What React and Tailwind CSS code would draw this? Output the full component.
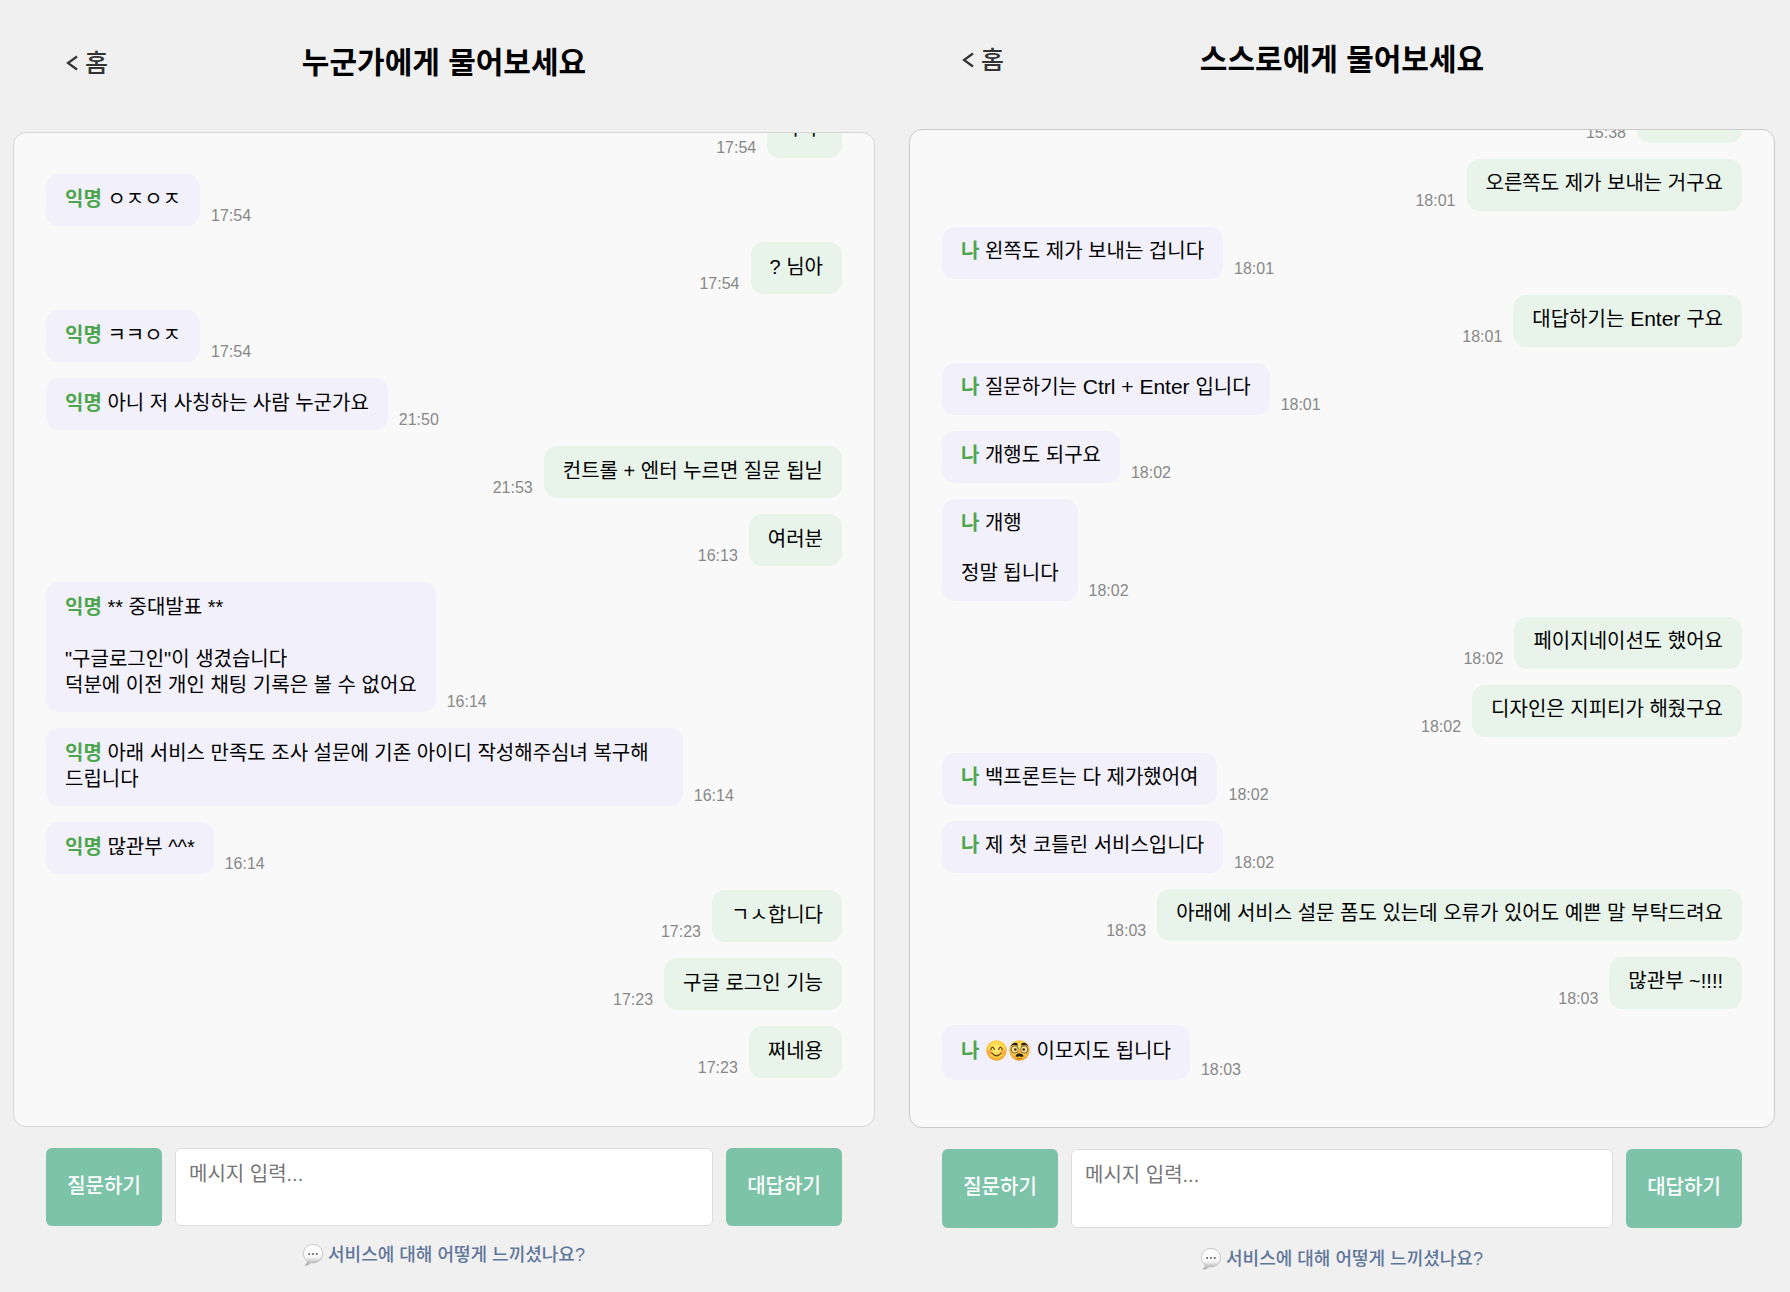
import React from "react";
import clsx from "clsx";

const SmileEmoji = () => (
  <svg viewBox="0 0 40 40" className="h-[21px] w-[21px]" role="img" aria-label="웃는 얼굴">
    <defs>
      <radialGradient id="smileFace" cx="50%" cy="42%" r="58%">
        <stop offset="0" stopColor="#fff07a" />
        <stop offset="0.65" stopColor="#fdd343" />
        <stop offset="1" stopColor="#ee9c2b" />
      </radialGradient>
    </defs>
    <circle cx="20" cy="20" r="19.5" fill="url(#smileFace)" />
    <ellipse cx="8" cy="23" rx="5" ry="4" fill="#f58a4b" opacity="0.55" />
    <ellipse cx="32" cy="23" rx="5" ry="4" fill="#f58a4b" opacity="0.55" />
    <path d="M9 18 Q12.500 9 16 18 M24 18 Q27.500 9 31 18" fill="none" stroke="#6b4318" strokeWidth="2.400" strokeLinecap="round" />
    <path d="M11 25 Q20 35 29 25" fill="none" stroke="#6b4318" strokeWidth="2.400" strokeLinecap="round" />
  </svg>
);

const DisguiseEmoji = () => (
  <svg viewBox="0 0 40 40" className="h-[21px] w-[21px]" role="img" aria-label="변장한 얼굴">
    <defs>
      <radialGradient id="disguiseFace" cx="50%" cy="42%" r="58%">
        <stop offset="0" stopColor="#ffe96a" />
        <stop offset="0.65" stopColor="#fbcd41" />
        <stop offset="1" stopColor="#eb972a" />
      </radialGradient>
    </defs>
    <circle cx="20" cy="20" r="19.500" fill="url(#disguiseFace)" />
    <path d="M3 12 Q8 2 17 7 L16 11 Q9 8 3 12Z M37 12 Q32 2 23 7 L24 11 Q31 8 37 12Z" fill="#2b2320" />
    <circle cx="11" cy="18" r="7" fill="#f6e28f" stroke="#4a3b2a" strokeWidth="1.500" />
    <circle cx="29" cy="18" r="7" fill="#f6e28f" stroke="#4a3b2a" strokeWidth="1.500" />
    <circle cx="12" cy="18" r="2.500" fill="#4a2d13" />
    <circle cx="28" cy="18" r="2.500" fill="#4a2d13" />
    <ellipse cx="20" cy="22" rx="4" ry="5" fill="#f3a93c" />
    <path d="M20 26 Q26 25 28 31 Q24 33 20 31 Q16 33 12 31 Q14 25 20 26Z" fill="#241c1a" />
    <path d="M16 35 Q20 36 24 35" fill="none" stroke="#8a4c1b" strokeWidth="1.500" strokeLinecap="round" />
  </svg>
);

const SpeechEmoji = ({ id }) => (
  <svg viewBox="0 0 42 46" className="h-[22px] w-5 shrink-0" aria-hidden="true">
    <defs>
      <linearGradient id={id} x1="0" y1="0" x2="0" y2="1">
        <stop offset="0" stopColor="#ffffff" />
        <stop offset="0.6" stopColor="#f8f8f8" />
        <stop offset="1" stopColor="#a0a0a0" />
      </linearGradient>
    </defs>
    <path
      d="M21 1 C9 1 1 9 1 20 C1 27 4 32 9 36 C9 40 7 42 4 45 C10 45 14 42 17 39 L21 39.500 C33 39.500 41 31 41 20 C41 9 33 1 21 1Z"
      fill={`url(#${id})`}
      stroke="#b4b4b4"
      strokeWidth="1.500"
    />
    <circle cx="13" cy="21" r="2" fill="#555" />
    <circle cx="21" cy="21" r="2" fill="#555" />
    <circle cx="29" cy="21" r="2" fill="#555" />
  </svg>
);

const Keys = ({ children }) => (
  <kbd className="font-['Liberation_Sans',sans-serif] text-[21px] leading-none">{children}</kbd>
);

const leftChat = {
  id: "public",
  title: "누군가에게 물어보세요",
  sender: "익명",
  headerClass: "pt-[45px]",
  boxClass: "border-[#d6d6d6] pb-12",
  bubbleClass: "leading-[26px] pt-3 pb-3.5",
  formClass: "h-[78px]",
  linkClass: "pt-[17px] pb-[25px]",
  messages: [
    { mine: true, time: "17:54", text: "ㅜㅜ" },
    { time: "17:54", text: "ㅇㅈㅇㅈ" },
    { mine: true, time: "17:54", text: "? 님아" },
    { time: "17:54", text: "ㅋㅋㅇㅈ" },
    { time: "21:50", text: "아니 저 사칭하는 사람 누군가요" },
    { mine: true, time: "21:53", text: "컨트롤 + 엔터 누르면 질문 됩닏" },
    { mine: true, time: "16:13", text: "여러분" },
    { time: "16:14", text: "** 중대발표 **\n\n\"구글로그인\"이 생겼습니다\n덕분에 이전 개인 채팅 기록은 볼 수 없어요" },
    { time: "16:14", text: "아래 서비스 만족도 조사 설문에 기존 아이디 작성해주심녀 복구해드립니다" },
    { time: "16:14", text: "많관부 ^^*" },
    { mine: true, time: "17:23", text: "ㄱㅅ합니다" },
    { mine: true, time: "17:23", text: "구글 로그인 기능" },
    { mine: true, time: "17:23", text: "쩌네용" },
  ],
};

const rightChat = {
  id: "self",
  title: "스스로에게 물어보세요",
  sender: "나",
  headerClass: "pt-[42px]",
  boxClass: "border-[#cacaca] pb-[47px]",
  bubbleClass: "leading-[25px] pt-3 pb-[15px]",
  formClass: "h-[79px]",
  linkClass: "pt-[19px] pb-[21px]",
  messages: [
    { mine: true, time: "15:38", text: "", bubbleClass: "h-[52px] w-[105px]" },
    { mine: true, time: "18:01", text: "오른쪽도 제가 보내는 거구요" },
    { time: "18:01", text: "왼쪽도 제가 보내는 겁니다" },
    { mine: true, time: "18:01", text: <>대답하기는<Keys> Enter </Keys>구요</> },
    { time: "18:01", text: <>질문하기는<Keys> Ctrl + Enter </Keys>입니다</> },
    { time: "18:02", text: "개행도 되구요" },
    { time: "18:02", text: "개행\n\n정말 됩니다" },
    { mine: true, time: "18:02", text: "페이지네이션도 했어요" },
    { mine: true, time: "18:02", text: "디자인은 지피티가 해줬구요" },
    { time: "18:02", text: "백프론트는 다 제가했어여" },
    { time: "18:02", text: "제 첫 코틀린 서비스입니다" },
    { mine: true, time: "18:03", text: "아래에 서비스 설문 폼도 있는데 오류가 있어도 예쁜 말 부탁드려요" },
    { mine: true, time: "18:03", text: "많관부 ~!!!!" },
    {
      time: "18:03",
      text: (
        <>
          <span className="-mt-1 inline-flex gap-0.5 px-px align-middle">
            <SmileEmoji />
            <DisguiseEmoji />
          </span>{" "}
          이모지도 됩니다
        </>
      ),
      bubbleClass: "leading-[25px] h-[55px] pt-3.5 pb-3",
    },
  ],
};

function Message({ message, sender, defaultBubble }) {
  const { mine, time, text, bubbleClass } = message;
  return (
    <li className={clsx("flex shrink-0 items-end gap-[11px]", mine && "flex-row-reverse")}>
      <p
        className={clsx(
          "max-w-[80%] rounded-[13px] px-[19px] text-[20px] whitespace-pre-wrap text-black",
          bubbleClass ?? defaultBubble,
          mine ? "bg-[#e8f3ea]" : "bg-[#f2f0fa]"
        )}
      >
        {!mine && <strong className="font-bold text-[#4ea64f]">{sender} </strong>}
        {text}
      </p>
      <time className="text-base leading-5 text-[#888888]">{time}</time>
    </li>
  );
}

function ChatPanel({ chat }) {
  return (
    <section className="flex min-h-0 min-w-0 flex-col">
      <header className={clsx("grid grid-cols-[1fr_auto_1fr] items-center px-[53px] pb-[51px]", chat.headerClass)}>
        <a href="#home" className="justify-self-start text-[25px] leading-9 font-medium text-[#333333]">
          <span className="flex items-center gap-[7px]">
            <svg viewBox="0 0 12 16" className="h-4 w-3" fill="none" stroke="currentColor" strokeWidth="2.200" aria-hidden="true">
              <path d="M11 1.500 L2 8 L11 14.500" />
            </svg>
            홈
          </span>
        </a>
        <h1 className="text-[30px] leading-9 font-bold text-black">{chat.title}</h1>
      </header>

      <ul
        className={clsx(
          "flex min-h-0 flex-1 flex-col justify-end gap-4 overflow-hidden rounded-[13px] border bg-[#f9f9f9] px-8",
          chat.boxClass
        )}
      >
        {chat.messages.map((m, i) => (
          <Message key={i} message={m} sender={chat.sender} defaultBubble={chat.bubbleClass} />
        ))}
      </ul>

      <form className={clsx("mx-[33px] mt-[21px] flex gap-[13px]", chat.formClass)} onSubmit={(e) => e.preventDefault()}>
        <button type="button" className="w-[116px] rounded-md bg-[#7cc3aa] pb-[3px] text-[20px] font-medium text-white">
          질문하기
        </button>
        <textarea
          id={`${chat.id}-message`}
          aria-label="메시지"
          placeholder="메시지 입력..."
          className="min-w-0 flex-1 resize-none rounded-md border border-[#dddddd] bg-white px-[13px] pt-[13px] text-[20px] leading-6 placeholder:text-[#757575]"
        />
        <button type="submit" className="w-[116px] rounded-md bg-[#7cc3aa] pb-[3px] text-[20px] font-medium text-white">
          대답하기
        </button>
      </form>

      <div className={clsx("flex justify-center", chat.linkClass)}>
        <a href="#survey" className="flex items-center gap-[5px] text-lg leading-6 font-medium text-[#5f769b]">
          <SpeechEmoji id={`${chat.id}-speech`} />
          서비스에 대해 어떻게 느끼셨나요?
        </a>
      </div>
    </section>
  );
}

export default function App() {
  return (
    <main className="grid h-screen grid-cols-[862fr_866fr] grid-rows-1 gap-[34px] bg-[#f0f0f0] pr-[15px] pl-[13px] font-['Liberation_Sans','Noto_Sans_CJK_KR',sans-serif]">
      <ChatPanel chat={leftChat} />
      <ChatPanel chat={rightChat} />
    </main>
  );
}
